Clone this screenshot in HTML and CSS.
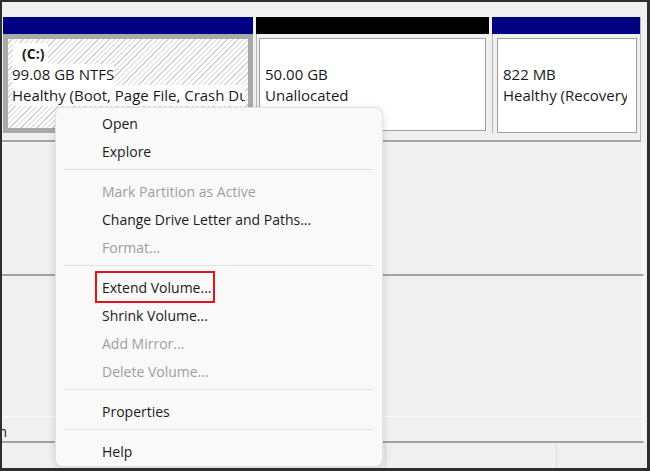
FILE: index.html
```html
<!DOCTYPE html>
<html>
<head>
<meta charset="utf-8">
<link rel="stylesheet" href="styles.css">
</head>
<body>
<div class="window">
  <div class="top-gap"></div>
  <div class="disk">
    <div class="part part-c">
      <div class="bar bar-blue"></div>
      <div class="body body-selected">
        <div class="label label-name">(C:)</div>
        <div class="label">99.08 GB NTFS</div>
        <div class="label">Healthy (Boot, Page File, Crash Dump, Primary Partition)</div>
      </div>
    </div>
    <div class="part part-u">
      <div class="bar bar-black"></div>
      <div class="body">
        <div class="box">
          <div class="line"></div>
          <div class="line">50.00 GB</div>
          <div class="line">Unallocated</div>
        </div>
      </div>
    </div>
    <div class="part part-r">
      <div class="bar bar-blue"></div>
      <div class="body">
        <div class="box">
          <div class="line"></div>
          <div class="line">822 MB</div>
          <div class="line">Healthy (Recovery Partition)</div>
        </div>
      </div>
    </div>
  </div>
  <div class="pane pane-upper"></div>
  <div class="pane pane-lower"></div>
  <div class="legend">
    <div class="legend-clip"><span>Primary partition</span></div>
  </div>
  <div class="status">
    <div class="status-cell status-main"></div>
    <div class="status-cell status-mid"></div>
    <div class="status-cell status-end"></div>
  </div>

  <div class="menu">
    <div class="item">Open</div>
    <div class="item">Explore</div>
    <div class="sep"></div>
    <div class="item disabled">Mark Partition as Active</div>
    <div class="item">Change Drive Letter and Paths...</div>
    <div class="item disabled">Format...</div>
    <div class="sep"></div>
    <div class="item"><span class="hl">Extend Volume...</span></div>
    <div class="item">Shrink Volume...</div>
    <div class="item disabled">Add Mirror...</div>
    <div class="item disabled">Delete Volume...</div>
    <div class="sep"></div>
    <div class="item">Properties</div>
    <div class="sep"></div>
    <div class="item">Help</div>
  </div>
</div>
</body>
</html>
```

FILE: styles.css
```css
* { box-sizing: border-box; }

html, body {
  margin: 0;
  padding: 0;
  background: #ffffff;
}

.window {
  position: relative;
  width: 650px;
  height: 471px;
  border-style: solid;
  border-color: #2e2e2e;
  border-width: 2px 3px 3px 2px;
  background: #f0f0f0;
  display: flex;
  flex-direction: column;
  overflow: hidden;
  font-family: "Open Sans", "Noto Sans", sans-serif;
  font-size: 14px;
  color: #1a1a1a;
}

.top-gap {
  height: 15px;
  flex: none;
}

.disk {
  flex: none;
  display: flex;
  gap: 3px;
  padding: 0 0 7px 1px;
  margin-right: 6px;
  border-right: 1px solid #b4b4b4;
  border-bottom: 2px solid #a3a3a3;
  font-size: 15px;
}

.part {
  display: flex;
  flex-direction: column;
}

.part-c { width: 250px; }
.part-u { width: 233px; }
.part-r { flex: 1; min-width: 0; }

.bar {
  height: 17px;
}

.bar-blue { background: #000080; }
.bar-black { background: #000000; }

.body {
  height: 99px;
  padding: 4px 3px 2px 2px;
  border-left: 1px solid #b4b4b4;
}

.part-r .body {
  padding: 4px 3px 0 4px;
  border-left: 1px solid #b4b4b4;
}

.body-selected {
  border: 5px solid #a9a9a9;
  padding: 4px 3px 0 4px;
  overflow: hidden;
  background: repeating-linear-gradient(135deg, #ffffff 0 2.8px, #d2d2d2 2.8px 3.8px);
}

.label {
  width: fit-content;
  max-width: 100%;
  background: #ffffff;
  line-height: 21px;
  white-space: nowrap;
  overflow: hidden;
}

.label-name {
  font-weight: 700;
  font-size: 14px;
  padding: 0 4px 0 9px;
  margin-left: 1px;
}

.box {
  height: 100%;
  background: #ffffff;
  border: 1px solid #a0a0a0;
  padding: 4px 9px 0 5px;
  overflow: hidden;
}

.line {
  height: 21px;
  line-height: 21px;
  white-space: nowrap;
  overflow: hidden;
}

.pane {
  flex: none;
  margin-right: 3px;
  border-right: 1px solid #ffffff;
}

.pane-upper {
  height: 134px;
  border-top: 1px solid #f7f7f7;
  border-bottom: 2px solid #a3a3a3;
}

.pane-lower {
  height: 141px;
  border-bottom: 1px solid #fafafa;
}

.legend {
  flex: none;
  height: 26px;
  margin-right: 3px;
  border-right: 1px solid #ffffff;
  border-bottom: 2px solid #a3a3a3;
  display: flex;
  align-items: center;
  padding-top: 5px;
}

.legend-clip {
  width: 5px;
  overflow: hidden;
  display: flex;
  justify-content: flex-end;
  white-space: nowrap;
  line-height: 20px;
}

.legend-clip span {
  flex: none;
}

.status {
  flex: 1;
  display: flex;
}

.status-cell {
  height: 100%;
}

.status-main {
  width: 384px;
  border-right: 1px solid #dcdcdc;
}

.status-mid {
  width: 171px;
  border-right: 1px solid #dcdcdc;
}

.status-end {
  flex: 1;
}

.menu {
  position: absolute;
  left: 53px;
  top: 105px;
  width: 328px;
  height: 360px;
  background: #f9f9f9;
  border: 1px solid #e2e2e2;
  border-radius: 8px;
  box-shadow: 0 2px 8px rgba(0, 0, 0, 0.14);
  padding: 2px 0 0 0;
  font-size: 14px;
}

.item {
  height: 28px;
  line-height: 28px;
  padding-left: 46px;
  color: #1b1b1b;
  white-space: nowrap;
}

.item.disabled {
  color: #9e9e9e;
}

.sep {
  height: 1px;
  margin: 3px 9px 8px 8px;
  background: #e2e2e2;
}

.hl {
  position: relative;
}

.hl::after {
  content: "";
  position: absolute;
  left: -7px;
  right: -3px;
  top: -7px;
  bottom: -6px;
  border: 2px solid #e3121b;
}
```
